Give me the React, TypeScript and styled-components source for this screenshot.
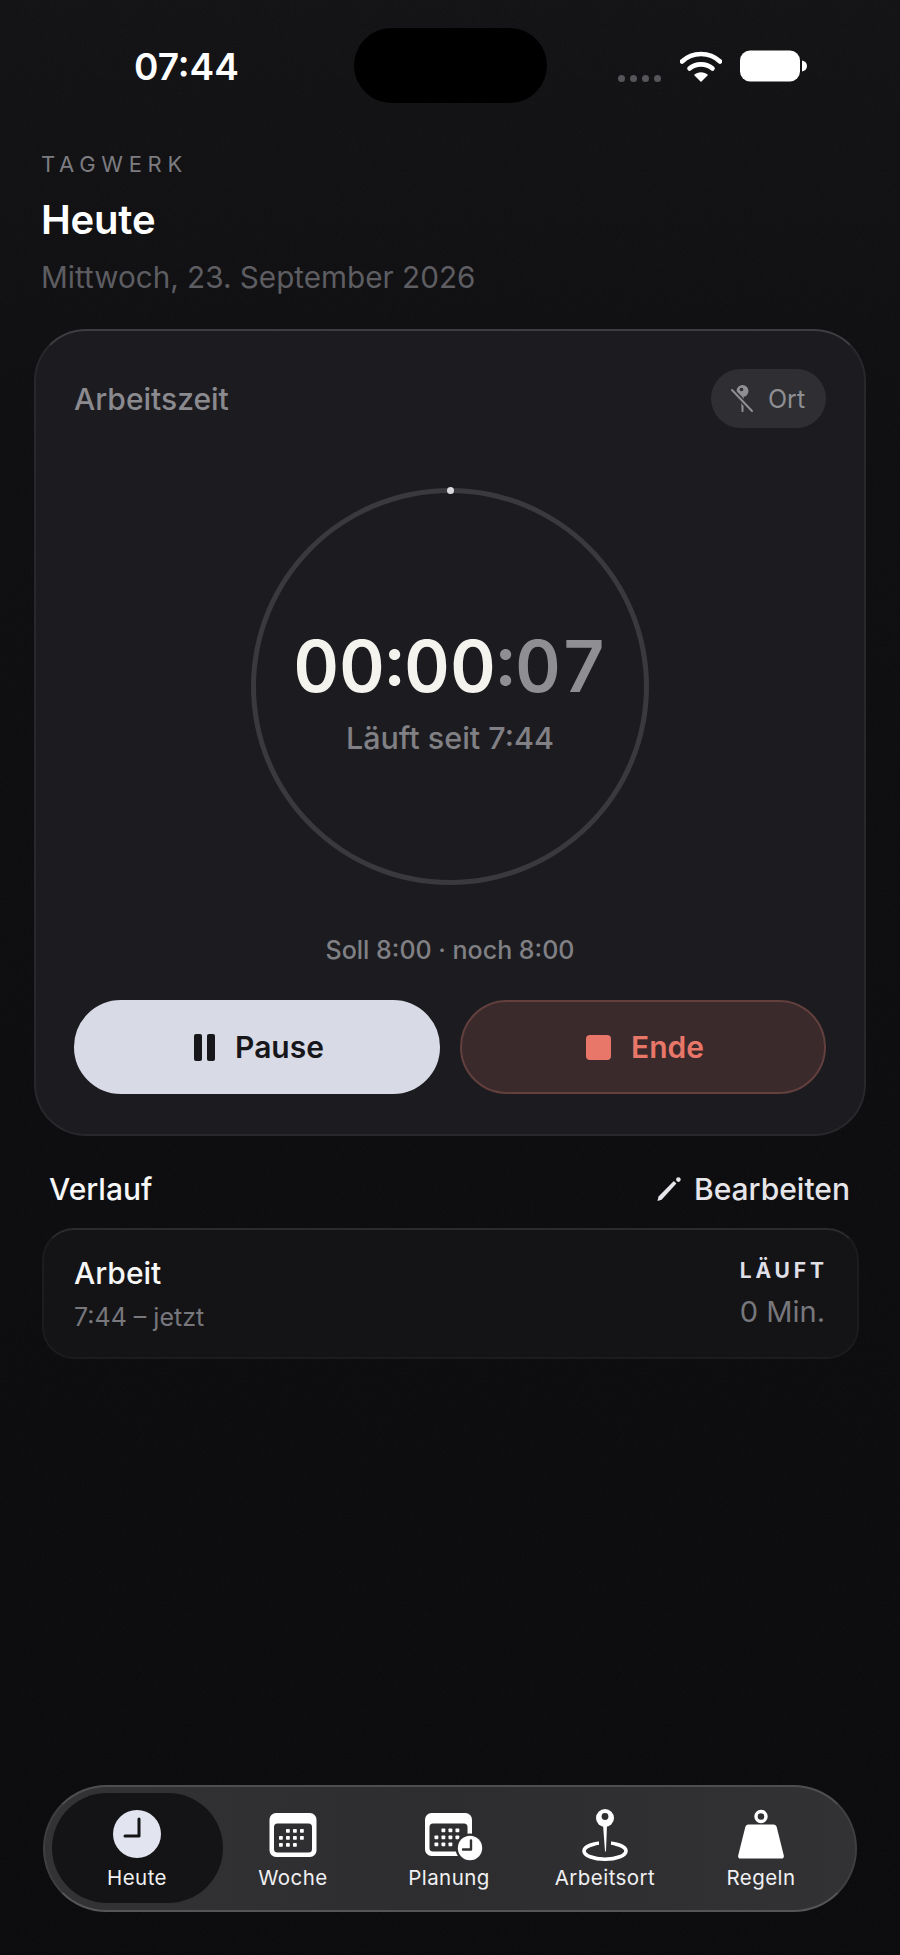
import React from "react"
import styled, { createGlobalStyle } from "styled-components"

const noise = `url("data:image/svg+xml,%3Csvg xmlns='http://www.w3.org/2000/svg' width='240' height='240'%3E%3Cfilter id='n'%3E%3CfeTurbulence type='fractalNoise' baseFrequency='0.9' numOctaves='2' stitchTiles='stitch'/%3E%3CfeColorMatrix values='0 0 0 0 1 0 0 0 0 1 0 0 0 0 1 0 0 0 0.5 -0.14'/%3E%3C/filter%3E%3Crect width='240' height='240' filter='url(%23n)' opacity='0.07'/%3E%3C/svg%3E")`

const GlobalStyle = createGlobalStyle`
	html, body {
		margin: 0;
		padding: 0;
		background: #0b0b0d;
	}
	* {
		box-sizing: border-box;
	}
`

const Page = styled.div`
	width: 900px;
	height: 1955px;
	display: flex;
	flex-direction: column;
	overflow: hidden;
	font-family: Inter, "Liberation Sans", sans-serif;
	background-image: ${noise}, linear-gradient(180deg, #121214 0%, #0d0d0f 25%, #0a0a0c 100%);
`
const StatusBar = styled.div`
	display: grid;
	grid-template-columns: 1fr 193px 1fr;
	align-items: center;
	margin-top: 28px;
	height: 75px;
`
const Clock = styled.div`
	padding-left: 134px;
	font-size: 37px;
	font-weight: 600;
	line-height: 1;
	color: #fff;
	margin-top: 2px;
`
const Island = styled.div`
	height: 75px;
	border-radius: 38px;
	background: #000;
`
const StatusIcons = styled.div`
	display: flex;
	align-items: center;
	padding-left: 71px;
`
const Dots = styled.div`
	display: flex;
	gap: 5px;
	margin: 25px 19px 0 0;
`
const Dot = styled.span`
	width: 7px;
	height: 7px;
	border-radius: 50%;
	background: #55555a;
`
const BatteryIcon = styled.svg`
	margin-left: 18px;
`
const Header = styled.header`
	padding: 48px 41px 0;
`
const Eyebrow = styled.div`
	font-size: 22px;
	line-height: 26px;
	font-weight: 400;
	letter-spacing: 5.7px;
	color: #7c7c81;
`
const Title = styled.h1`
	margin: 19px 0 0;
	font-size: 40px;
	line-height: 47px;
	font-weight: 600;
	letter-spacing: -0.2px;
	color: #fff;
`
const DateLine = styled.div`
	margin-top: 16px;
	font-size: 29.7px;
	line-height: 36px;
	color: #5d5d62;
`
const TimerCard = styled.section`
	margin: 34px 34px 0;
	padding: 38px 38px 40px;
	border-radius: 52px;
	background: #1c1c20;
	border: 2px solid #28282c;
	border-top-color: #3e3e42;
`
const CardTop = styled.div`
	display: flex;
	justify-content: space-between;
	align-items: center;
`
const CardLabel = styled.div`
	font-size: 30px;
	font-weight: 500;
	color: #8a8a8f;
`
const Chip = styled.div`
	display: flex;
	align-items: center;
	gap: 14px;
	width: 115px;
	height: 59px;
	padding-left: 19px;
	border-radius: 30px;
	background: #2f2f33;
	font-size: 25px;
	color: #8e8e93;
`
const Ring = styled.div`
	position: relative;
	width: 398px;
	height: 397px;
	margin: 60px auto 0;
	border-radius: 50%;
	border: 5px solid #3a3a3e;
	display: flex;
	flex-direction: column;
	align-items: center;
	padding-top: 130px;
`
const RingDot = styled.span`
	position: absolute;
	top: -6px;
	left: 50%;
	width: 7px;
	height: 7px;
	margin-left: -3.5px;
	border-radius: 50%;
	background: #d9d9de;
`
const Timer = styled.div`
	font-size: 71px;
	line-height: 86px;
	font-weight: 600;
	color: #f4f3ee;
	font-variant-numeric: tabular-nums;
	white-space: nowrap;
`
const Seconds = styled.span`
	color: #8e8e93;
`
const Since = styled.div`
	margin-top: 11px;
	font-size: 30.5px;
	line-height: 36px;
	font-weight: 500;
	color: #808085;
`
const Target = styled.div`
	margin-top: 50px;
	text-align: center;
	font-size: 25px;
	line-height: 30px;
	font-weight: 500;
	color: #808085;
`
const Actions = styled.div`
	display: grid;
	grid-template-columns: 1fr 1fr;
	gap: 20px;
	margin-top: 35px;
`
const ActionButton = styled.button<{ $tone: "light" | "danger" }>`
	display: flex;
	align-items: center;
	justify-content: center;
	gap: 20px;
	height: 94px;
	padding-left: 10px;
	border-radius: 47px;
	font-family: inherit;
	font-size: 30px;
	font-weight: 600;
	border: 2px solid ${p => (p.$tone === "light" ? "#d8dbe6" : "#63403d")};
	background: ${p => (p.$tone === "light" ? "#d8dbe6" : "#3a2a2b")};
	color: ${p => (p.$tone === "light" ? "#17171b" : "#e8776a")};
`
const PauseIcon = styled.span`
	display: flex;
	gap: 5px;
`
const PauseBar = styled.span`
	width: 8px;
	height: 27px;
	border-radius: 2px;
	background: #17171b;
`
const StopIcon = styled.span`
	width: 25px;
	height: 25px;
	border-radius: 4px;
	background: #e8776a;
`
const SectionHead = styled.div`
	display: flex;
	justify-content: space-between;
	align-items: center;
	margin: 33px 50px 0 49px;
	height: 40px;
`
const SectionTitle = styled.div`
	font-size: 30px;
	font-weight: 500;
	color: #f7f7f7;
`
const EditLink = styled.div`
	display: flex;
	align-items: center;
	gap: 12px;
	font-size: 30px;
	font-weight: 500;
	color: #e6e6ea;
`
const EntryCard = styled.div`
	display: flex;
	justify-content: space-between;
	margin: 19px 41px 0 42px;
	height: 131px;
	padding: 25px 32px 0 30px;
	border-radius: 32px;
	background: #141417;
	border: 2px solid #1c1c1f;
	border-top-color: #2b2b2e;
`
const EntryColumn = styled.div<{ $end?: boolean }>`
	display: flex;
	flex-direction: column;
	align-items: ${p => (p.$end ? "flex-end" : "flex-start")};
	padding-top: ${p => (p.$end ? "3px" : "0")};
`
const EntryName = styled.div`
	font-size: 30px;
	line-height: 36px;
	font-weight: 500;
	color: #f7f7f7;
`
const EntryTime = styled.div`
	margin-top: 11px;
	font-size: 25px;
	line-height: 30px;
	color: #77777c;
`
const StatusTag = styled.div`
	font-size: 21px;
	line-height: 26px;
	font-weight: 700;
	letter-spacing: 3.9px;
	margin-right: -3px;
	color: #dfdfe8;
`
const Duration = styled.div`
	margin-top: 10px;
	font-size: 29px;
	line-height: 36px;
	color: #77777c;
`
const TabBar = styled.nav`
	display: grid;
	grid-template-columns: repeat(5, 156px);
	margin: auto 43px 43px;
	height: 127px;
	padding: 0 14px;
	border-radius: 64px;
	background: linear-gradient(90deg, #333335 0%, #2d2d2f 50%, #323234 100%);
	border: 2px solid #3f3f41;
	border-top-color: #4e4e50;
	border-bottom-color: #555557;
`
const Tab = styled.div<{ $active?: boolean }>`
	position: relative;
	display: flex;
	flex-direction: column;
	align-items: center;
	padding-top: 22px;
	&::before {
		content: "";
		display: ${p => (p.$active ? "block" : "none")};
		position: absolute;
		left: -7px;
		top: 6px;
		width: 171px;
		height: 110px;
		border-radius: 55px;
		background: #141416;
	}
`
const TabIcon = styled.svg`
	position: relative;
	width: 60px;
	height: 52px;
	overflow: visible;
`
const TabLabel = styled.span`
	position: relative;
	margin-top: 4px;
	font-size: 20.5px;
	line-height: 26px;
	font-weight: 400;
	letter-spacing: 0.45px;
	color: #f0f0f2;
`

const CalendarDots = ({ x, y }: { x: number; y: number }) => (
	<g fill="#fff" transform={`translate(${x} ${y})`}>
		{[[9, 0], [16, 0], [23, 0], [2, 7], [9, 7], [16, 7], [23, 7], [2, 14], [9, 14], [16, 14]].map(([a, b]) => (
			<rect key={`${a}-${b}`} x={a} y={b} width="3.8" height="3.8" rx="0.7" />
		))}
	</g>
)

const tabs = [
	{
		label: "Heute",
		active: true,
		icon: (
			<>
				<circle cx="30" cy="25" r="24" fill="#e2e4f0" />
				<path d="M32 10v17H18" fill="none" stroke="#141416" strokeWidth="3" strokeLinecap="round" strokeLinejoin="round" />
			</>
		),
	},
	{
		label: "Woche",
		icon: (
			<>
				<rect x="6.5" y="4" width="47" height="44" rx="6.5" fill="#fff" />
				<rect x="11" y="14.5" width="38" height="29" rx="3.5" fill="#2f2f31" />
				<CalendarDots x={14} y={20} />
			</>
		),
	},
	{
		label: "Planung",
		icon: (
			<>
				<rect x="6" y="4" width="47" height="43" rx="6.5" fill="#fff" />
				<rect x="10.5" y="14.5" width="38" height="28" rx="3.5" fill="#2f2f31" />
				<CalendarDots x={13.5} y={19.5} />
				<circle cx="51" cy="39" r="14.5" fill="#2f2f31" />
				<circle cx="51" cy="39" r="12.2" fill="#fff" />
				<path d="M52 31.5v9h-8" fill="none" stroke="#2f2f31" strokeWidth="2.4" strokeLinecap="round" strokeLinejoin="round" />
			</>
		),
	},
	{
		label: "Arbeitsort",
		icon: (
			<>
				<ellipse cx="30" cy="42" rx="21" ry="8.2" fill="none" stroke="#fff" strokeWidth="3.6" />
				<rect x="24" y="30" width="12" height="10" fill="#2f2f31" />
				<path d="M28 16h4l-1 26c0 .8-1 .8-1 0z" fill="#fff" />
				<circle cx="30" cy="9" r="9" fill="#fff" />
				<circle cx="30" cy="7.5" r="3.4" fill="#2f2f31" />
			</>
		),
	},
	{
		label: "Regeln",
		icon: (
			<>
				<circle cx="30" cy="7.5" r="5" fill="none" stroke="#fff" strokeWidth="3.4" />
				<path d="M17.5 15.5h25c1.6 0 2.8 1 3.2 2.4l7.1 28.6c.4 1.6-.6 3-2.2 3H9.4c-1.6 0-2.6-1.4-2.2-3l7.1-28.6c.4-1.4 1.6-2.4 3.2-2.4z" fill="#fff" />
			</>
		),
	},
]

const App = () => (
	<Page>
		<GlobalStyle />
		<StatusBar>
			<Clock>07:44</Clock>
			<Island />
			<StatusIcons>
				<Dots>
					<Dot />
					<Dot />
					<Dot />
					<Dot />
				</Dots>
				<svg width="42" height="32" viewBox="0 0 42 32">
					<path d="M2 11.5C12.5 1.5 29.5 1.5 40 11.5" fill="none" stroke="#fff" strokeWidth="4.6" strokeLinecap="round" />
					<path d="M9.5 18.5C15.5 13 26.5 13 32.5 18.5" fill="none" stroke="#fff" strokeWidth="4.6" strokeLinecap="round" />
					<path d="M21 32l-7-7c4-3.6 10-3.6 14 0z" fill="#fff" />
				</svg>
				<BatteryIcon width="68" height="32" viewBox="0 0 68 32">
					<rect x="0" y="0.5" width="60" height="31" rx="10" fill="#fff" />
					<path d="M62 10.5c3 .5 5 2.5 5 5.5s-2 5-5 5.5z" fill="#fff" />
				</BatteryIcon>
			</StatusIcons>
		</StatusBar>

		<Header>
			<Eyebrow>TAGWERK</Eyebrow>
			<Title>Heute</Title>
			<DateLine>Mittwoch, 23. September 2026</DateLine>
		</Header>

		<TimerCard>
			<CardTop>
				<CardLabel>Arbeitszeit</CardLabel>
				<Chip>
					<svg width="24" height="30" viewBox="0 0 24 30">
						<circle cx="12.5" cy="7" r="6" fill="#8e8e93" />
						<circle cx="11.5" cy="5.5" r="1.8" fill="#2f2f33" />
						<path d="M11 13h3l-.6 15h-1.8z" fill="#8e8e93" />
						<path d="M2 6l20 21" stroke="#2f2f33" strokeWidth="5" />
						<path d="M2 6l20 21" stroke="#8e8e93" strokeWidth="2" strokeLinecap="round" />
					</svg>
					Ort
				</Chip>
			</CardTop>
			<Ring>
				<RingDot />
				<Timer>
					00:00<Seconds>:07</Seconds>
				</Timer>
				<Since>Läuft seit 7:44</Since>
			</Ring>
			<Target>Soll 8:00 · noch 8:00</Target>
			<Actions>
				<ActionButton $tone="light">
					<PauseIcon>
						<PauseBar />
						<PauseBar />
					</PauseIcon>
					Pause
				</ActionButton>
				<ActionButton $tone="danger">
					<StopIcon />
					Ende
				</ActionButton>
			</Actions>
		</TimerCard>

		<SectionHead>
			<SectionTitle>Verlauf</SectionTitle>
			<EditLink>
				<svg width="26" height="26" viewBox="0 0 26 26">
					<path d="M1.5 25l1-4.4L17.8 5l2.6 2.6L5.6 23.8z" fill="#e6e6ea" />
					<circle cx="22.4" cy="3.6" r="2.3" fill="#e6e6ea" />
				</svg>
				Bearbeiten
			</EditLink>
		</SectionHead>
		<EntryCard>
			<EntryColumn>
				<EntryName>Arbeit</EntryName>
				<EntryTime>7:44 – jetzt</EntryTime>
			</EntryColumn>
			<EntryColumn $end>
				<StatusTag>LÄUFT</StatusTag>
				<Duration>0 Min.</Duration>
			</EntryColumn>
		</EntryCard>

		<TabBar>
			{tabs.map(tab => (
				<Tab key={tab.label} $active={tab.active}>
					<TabIcon viewBox="0 0 60 52">{tab.icon}</TabIcon>
					<TabLabel>{tab.label}</TabLabel>
				</Tab>
			))}
		</TabBar>
	</Page>
)

export default App
